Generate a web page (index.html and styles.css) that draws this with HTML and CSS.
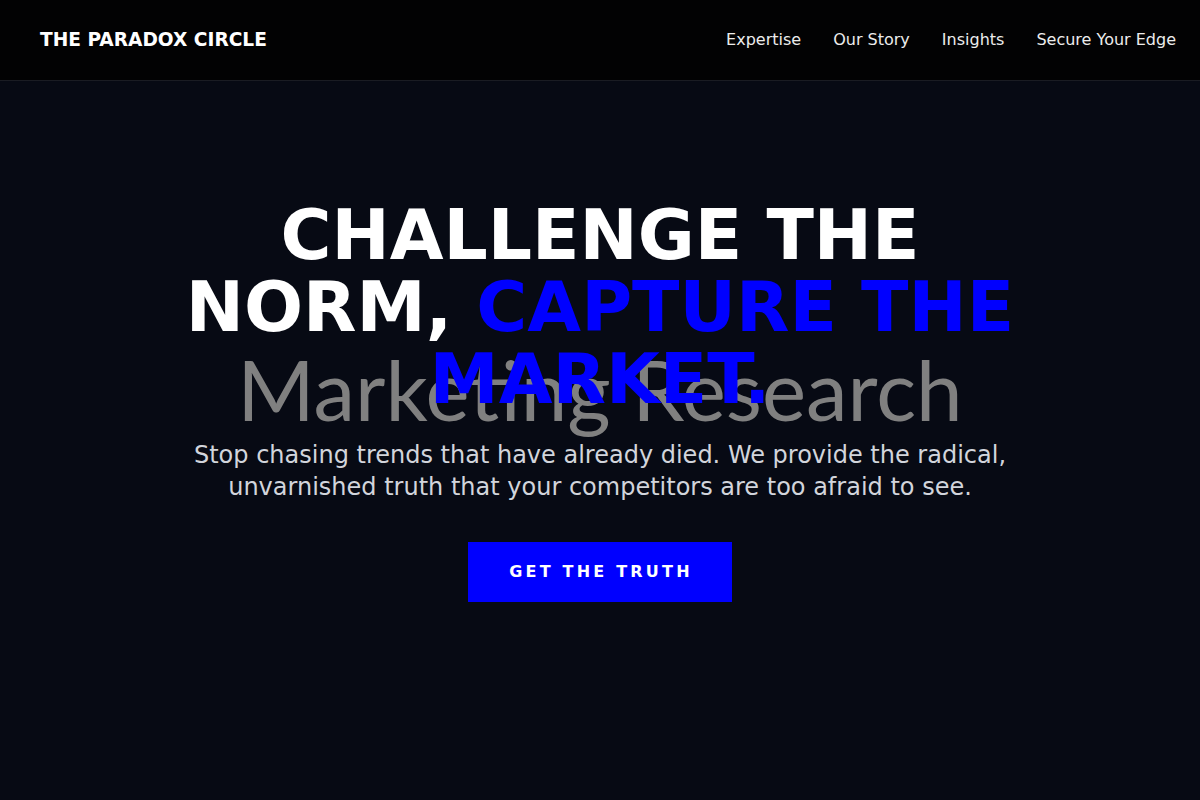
FILE: index.html
```html
<!DOCTYPE html>
<html lang="en">
<head>
<meta charset="utf-8">
<title>The Paradox Circle</title>
<link rel="stylesheet" href="styles.css">
</head>
<body>
<header class="site-header">
  <div class="logo">THE PARADOX CIRCLE</div>
  <nav class="nav">
    <a href="#">Expertise</a>
    <a href="#">Our Story</a>
    <a href="#">Insights</a>
    <a href="#">Secure Your Edge</a>
  </nav>
</header>
<main class="hero">
  <div class="hero-content">
    <div class="watermark" aria-hidden="true">Marketing Research</div>
    <h1 class="headline">CHALLENGE THE NORM, <span class="accent">CAPTURE THE MARKET.</span></h1>
    <p class="lead">Stop chasing trends that have already died. We provide the radical, unvarnished truth that your competitors are too afraid to see.</p>
    <a class="cta" href="#">GET THE TRUTH</a>
  </div>
</main>
</body>
</html>
```

FILE: styles.css
```css
* { box-sizing: border-box; }
html, body { margin: 0; padding: 0; }
body {
  background: #070a14;
  color: #ffffff;
  font-family: "DejaVu Sans", Verdana, sans-serif;
  min-height: 800px;
}
.site-header {
  height: 81px;
  background: #020203;
  border-bottom: 1px solid #1a1c23;
  display: flex;
  align-items: center;
  justify-content: space-between;
  padding: 0 24px 1px 40px;
}
.logo {
  font-weight: bold;
  font-size: 18.6px;
  color: #ffffff;
}
.nav {
  display: flex;
  gap: 32px;
}
.nav a {
  color: #ececec;
  text-decoration: none;
  font-size: 16px;
}
.hero {
  padding: 118px 24px 0;
  display: flex;
  justify-content: center;
}
.hero-content {
  position: relative;
  max-width: 900px;
  width: 100%;
  display: flex;
  flex-direction: column;
  align-items: center;
  text-align: center;
}
.watermark {
  position: absolute;
  top: 149px;
  left: 50%;
  transform: translateX(-50%);
  white-space: nowrap;
  font-family: Lato, sans-serif;
  font-size: 83.5px;
  line-height: 1;
  color: #808080;
  z-index: 0;
}
.headline {
  position: relative;
  z-index: 1;
  margin: 0 0 23.5px;
  font-size: 69.5px;
  line-height: 72px;
  font-weight: bold;
  color: #ffffff;
}
.accent { color: #0000ff; }
.lead {
  position: relative;
  z-index: 1;
  margin: 0 0 39px;
  font-size: 24px;
  line-height: 32.4px;
  color: #d2d5dc;
}
.cta {
  position: relative;
  z-index: 1;
  display: inline-block;
  background: #0000ff;
  color: #ffffff;
  text-decoration: none;
  font-weight: bold;
  font-size: 16px;
  line-height: 20px;
  letter-spacing: 0.2em;
  padding: 20px 39px 20px 41px;
}
```
